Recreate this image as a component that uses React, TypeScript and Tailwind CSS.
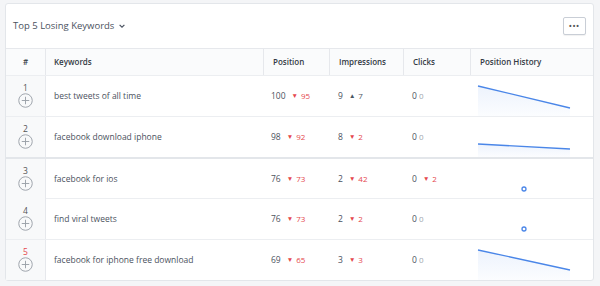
import React from "react";

type Delta = { dir: "up" | "down"; value: number } | null;

type Row = {
  n: number;
  keyword: string;
  position: number;
  positionDelta: Delta;
  impressions: number;
  impressionsDelta: Delta;
  clicks: number;
  clicksDelta: Delta;
  history: "drop" | "flat" | "dot";
  y1?: number;
  y2?: number;
};

const rows: Row[] = [
  { n: 1, keyword: "best tweets of all time", position: 100, positionDelta: { dir: "down", value: 95 }, impressions: 9, impressionsDelta: { dir: "up", value: 7 }, clicks: 0, clicksDelta: null, history: "drop", y1: 10, y2: 32 },
  { n: 2, keyword: "facebook download iphone", position: 98, positionDelta: { dir: "down", value: 92 }, impressions: 8, impressionsDelta: { dir: "down", value: 2 }, clicks: 0, clicksDelta: null, history: "flat", y1: 27, y2: 32 },
  { n: 3, keyword: "facebook for ios", position: 76, positionDelta: { dir: "down", value: 73 }, impressions: 2, impressionsDelta: { dir: "down", value: 42 }, clicks: 0, clicksDelta: { dir: "down", value: 2 }, history: "dot" },
  { n: 4, keyword: "find viral tweets", position: 76, positionDelta: { dir: "down", value: 73 }, impressions: 2, impressionsDelta: { dir: "down", value: 2 }, clicks: 0, clicksDelta: null, history: "dot" },
  { n: 5, keyword: "facebook for iphone free download", position: 69, positionDelta: { dir: "down", value: 65 }, impressions: 3, impressionsDelta: { dir: "down", value: 3 }, clicks: 0, clicksDelta: null, history: "drop", y1: 10, y2: 30 },
];

const cols = "grid grid-cols-[40px_218px_66px_74px_67px_1fr]";

function DeltaTag({ d }: { d: Delta }) {
  if (!d) return <span className="ml-[2px] text-[8px] text-[#a0a6ae]">0</span>;
  const up = d.dir === "up";
  return (
    <span className={`ml-[6px] inline-flex items-center gap-[3px] text-[8px] ${up ? "text-[#4b5563]" : "text-[#e5484d]"}`}>
      <span className="text-[6.5px]">{up ? "▲" : "▼"}</span>
      {d.value}
    </span>
  );
}

function PlusIcon() {
  return (
    <svg width="15" height="15" viewBox="0 0 16 16" fill="none" stroke="#9aa0a8" strokeWidth="1">
      <circle cx="8" cy="8" r="7.2" />
      <path d="M8 4v8M4 8h8" />
    </svg>
  );
}

function Spark({ row }: { row: Row }) {
  if (row.history === "dot") {
    return (
      <svg width="122" height="40" className="block">
        <circle cx="53" cy="30" r="2" fill="white" stroke="#4a86e8" strokeWidth="1.3" />
      </svg>
    );
  }
  const y1 = row.y1 ?? 10;
  const y2 = row.y2 ?? 30;
  return (
    <svg width="122" height="40" className="block">
      <defs>
        <linearGradient id={`g${row.n}`} x1="0" y1="0" x2="0" y2="1">
          <stop offset="0" stopColor="#4a86e8" stopOpacity="0.1" />
          <stop offset="1" stopColor="#4a86e8" stopOpacity="0.02" />
        </linearGradient>
      </defs>
      <path d={`M7 ${y1} L99 ${y2} L99 40 L7 40 Z`} fill={`url(#g${row.n})`} />
      <path d={`M7 ${y1} L99 ${y2}`} stroke="#4a86e8" strokeWidth="1.3" fill="none" />
    </svg>
  );
}

export default function App() {
  return (
    <div className="h-[286px] w-[600px] bg-[#f4f5f7] pl-[5px] pt-[3px] font-['Open_Sans',sans-serif]">
      <div className="w-[589px] rounded-[3px] border border-[#e3e6ea] bg-white">
        <div className="flex h-[44px] items-center justify-between pl-[7px] pr-[7px]">
          <div className="flex items-center gap-[4px] text-[9.5px] font-medium text-[#4a5260]">
            Top 5 Losing Keywords
            <svg width="8" height="8" viewBox="0 0 10 10" fill="none" stroke="#4a5260" strokeWidth="1.5">
              <path d="M2 3.5l3 3 3-3" />
            </svg>
          </div>
          <button className="flex h-[18px] w-[23px] items-center justify-center rounded-[2px] border border-[#c9ced6] bg-white text-[#555] shadow-[0_1px_1px_rgba(0,0,0,0.06)]">
            <span className="text-[7px] font-bold leading-none tracking-[1px]">•••</span>
          </button>
        </div>

        <div className={`${cols} h-[27px] border-t border-[#e6e8ec] bg-[#fafbfc] text-[8px] font-semibold text-[#333a44]`}>
          <div className="flex items-center justify-center border-r border-[#e6e8ec]">#</div>
          <div className="flex items-center border-r border-[#e6e8ec] pl-[8px]">Keywords</div>
          <div className="flex items-center border-r border-[#e6e8ec] pl-[9px]">Position</div>
          <div className="flex items-center border-r border-[#e6e8ec] pl-[9px]">Impressions</div>
          <div className="flex items-center border-r border-[#e6e8ec] pl-[9px]">Clicks</div>
          <div className="flex items-center pl-[9px]">Position History</div>
        </div>

        {rows.map((r) => (
          <div key={r.n} className={`${cols} h-[41px] border-t ${r.n === 3 ? "border-t-2 border-[#e3e6ea]" : "border-[#eceef1]"} text-[8.5px] text-[#4b5260]`}>
            <div className="flex flex-col items-center justify-center gap-[1px] border-r border-[#e6e8ec] bg-[#f8f9fa]">
              <span className={`text-[8.5px] leading-none ${r.n === 5 ? "text-[#e5484d]" : "text-[#555]"}`}>{r.n}</span>
              <PlusIcon />
            </div>
            <div className="flex items-center pl-[8px]">{r.keyword}</div>
            <div className="flex items-center pl-[7px]">
              {r.position}
              <DeltaTag d={r.positionDelta} />
            </div>
            <div className="flex items-center pl-[8px]">
              {r.impressions}
              <DeltaTag d={r.impressionsDelta} />
            </div>
            <div className="flex items-center pl-[8px]">
              {r.clicks}
              <DeltaTag d={r.clicksDelta} />
            </div>
            <div className="flex items-center">
              <Spark row={r} />
            </div>
          </div>
        ))}
      </div>
    </div>
  );
}
